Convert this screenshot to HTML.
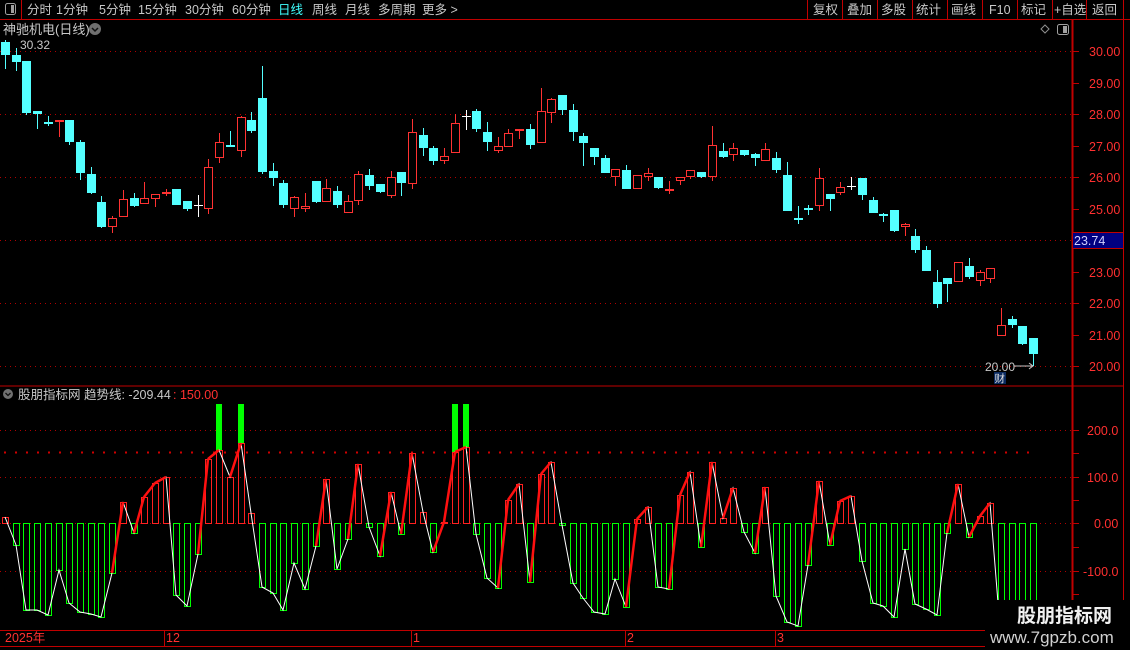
<!DOCTYPE html>
<html><head><meta charset="utf-8">
<style>
html,body{margin:0;padding:0;background:#000;width:1130px;height:650px;overflow:hidden}
svg{display:block}
text{font-family:"Liberation Sans","Noto Sans CJK SC",sans-serif}
</style></head><body>
<svg id="s" width="1130" height="650" xmlns="http://www.w3.org/2000/svg">
<rect width="1130" height="650" fill="#000"/>
<line x1="0" y1="19.5" x2="1130" y2="19.5" stroke="#c00000"/>
<line x1="21.5" y1="0" x2="21.5" y2="19" stroke="#c00000"/>
<rect x="5.5" y="3.5" width="10" height="11" rx="2" fill="none" stroke="#a0a0a0"/>
<rect x="11" y="5" width="3" height="8" fill="#a0a0a0"/>
<g font-size="12.5" fill="#c8c8c8">
<text x="27" y="14">分时</text><text x="56" y="14">1分钟</text><text x="99" y="14">5分钟</text>
<text x="138" y="14">15分钟</text><text x="185" y="14">30分钟</text><text x="232" y="14">60分钟</text>
<text x="278" y="14" fill="#40ffff">日线</text><text x="312" y="14">周线</text><text x="345" y="14">月线</text>
<text x="378" y="14">多周期</text><text x="422" y="14">更多 &gt;</text>
<text x="813" y="14">复权</text><text x="847" y="14">叠加</text><text x="881" y="14">多股</text>
<text x="916" y="14">统计</text><text x="951" y="14">画线</text><text x="989" y="14">F10</text>
<text x="1021" y="14">标记</text><text x="1054" y="14">+自选</text><text x="1092" y="14">返回</text>
</g>
<g stroke="#c00000"><line x1="807.5" y1="0" x2="807.5" y2="19"/><line x1="842.5" y1="0" x2="842.5" y2="19"/><line x1="877.5" y1="0" x2="877.5" y2="19"/><line x1="912.5" y1="0" x2="912.5" y2="19"/><line x1="947.5" y1="0" x2="947.5" y2="19"/><line x1="982.5" y1="0" x2="982.5" y2="19"/><line x1="1017.5" y1="0" x2="1017.5" y2="19"/><line x1="1052.5" y1="0" x2="1052.5" y2="19"/><line x1="1086.5" y1="0" x2="1086.5" y2="19"/><line x1="1123.5" y1="0" x2="1123.5" y2="19"/></g>
<text x="3" y="34" font-size="13" fill="#c8c8c8">神驰机电(日线)</text>
<circle cx="95" cy="29" r="6" fill="#707070"/><path d="M92 28 L95 31 L98 28" stroke="#111" stroke-width="1.5" fill="none"/>
<path d="M1045 25 L1049 29 L1045 33 L1041 29 Z" fill="none" stroke="#909090"/>
<rect x="1057.5" y="24.5" width="11" height="10" rx="2" fill="none" stroke="#a0a0a0"/><rect x="1063" y="26" width="4" height="7" fill="#a0a0a0"/>
<text x="20" y="49" font-size="12" fill="#c8c8c8">30.32</text>
<line x1="1072.5" y1="19" x2="1072.5" y2="630" stroke="#c00000" stroke-width="2"/>
<line x1="1123.5" y1="19" x2="1123.5" y2="650" stroke="#c00000"/>
<line x1="0" y1="386" x2="1123" y2="386" stroke="#c00000"/>
<line x1="0" y1="630.5" x2="1123" y2="630.5" stroke="#c00000"/>
<line x1="0" y1="646.5" x2="1130" y2="646.5" stroke="#c00000"/>
<g id="grid"></g>
<g id="ind"></g>
<g id="cand" shape-rendering="crispEdges"></g>
<g font-size="12.5" fill="#ff3030">
<text x="1089" y="56">30.00</text><text x="1089" y="88">29.00</text><text x="1089" y="119">28.00</text>
<text x="1089" y="151">27.00</text><text x="1089" y="182">26.00</text><text x="1089" y="214">25.00</text>
<text x="1089" y="277">23.00</text><text x="1089" y="308">22.00</text><text x="1089" y="340">21.00</text><text x="1089" y="371">20.00</text>
<text x="1087" y="435">200.0</text><text x="1087" y="482">100.0</text><text x="1094" y="528">0.00</text><text x="1083" y="576">-100.0</text>
</g>
<rect x="1073" y="233" width="50" height="15" fill="#000080"/>
<text x="1074" y="245" font-size="12.5" fill="#d0d0ff">23.74</text>
<line x1="1073" y1="248.5" x2="1123" y2="248.5" stroke="#c00000"/><line x1="1073" y1="232.5" x2="1123" y2="232.5" stroke="#c00000"/>
<circle cx="8" cy="394" r="5" fill="#707070"/><path d="M5.5 393 L8 395.5 L10.5 393" stroke="#111" stroke-width="1.3" fill="none"/>
<text x="18" y="399" font-size="12.5" fill="#c8c8c8">股朋指标网  趋势线: -209.44</text>
<text x="173" y="399" font-size="12.5" fill="#ff3030">: 150.00</text>
<text x="985" y="371" font-size="12" fill="#c8c8c8">20.00</text>
<path d="M1014 366 L1033 366 M1029 363 L1033 366 L1029 369" stroke="#c8c8c8" fill="none"/>
<rect x="994" y="372" width="12" height="12" fill="#0a2a60"/><text x="994.5" y="382" font-size="10.5" fill="#e0e0e0">财</text>
<g font-size="12.5" fill="#ff3030"><text x="5" y="642">2025年</text><text x="166" y="642">12</text><text x="413" y="642">1</text><text x="627" y="642">2</text><text x="777" y="642">3</text></g>
<g stroke="#c00000"><line x1="164.5" y1="630" x2="164.5" y2="646"/><line x1="411.5" y1="630" x2="411.5" y2="646"/><line x1="625.5" y1="630" x2="625.5" y2="646"/><line x1="775.5" y1="630" x2="775.5" y2="646"/></g>
<rect x="985" y="600" width="145" height="50" fill="#000"/>
<text x="1017" y="622" font-size="19" font-weight="bold" fill="#f0f0f0">股朋指标网</text>
<text x="990" y="643" font-size="17" fill="#d0d0d0">www.7gpzb.com</text>
</svg>
<script>
var NS="http://www.w3.org/2000/svg";
function el(p,t,a){var e=document.createElementNS(NS,t);for(var k in a)e.setAttribute(k,a[k]);p.appendChild(e);return e;}
var grid=document.getElementById('grid');
[51,114,177,240,303,366,430,477,523,571].forEach(function(y){el(grid,'line',{x1:0,y1:y+.5,x2:1072,y2:y+.5,stroke:'#b00000','stroke-dasharray':'1 4'});});
el(grid,'line',{x1:4,y1:452.5,x2:1036,y2:452.5,stroke:'#d00000','stroke-width':2,'stroke-dasharray':'2 9'});
[51,83,114,146,177,209,240,272,303,335,366].forEach(function(y){el(grid,'line',{x1:1073,y1:y+.5,x2:1079,y2:y+.5,stroke:'#c00000'});});
[430,453,477,500,523,547,571,594].forEach(function(y){el(grid,'line',{x1:1073,y1:y+.5,x2:1079,y2:y+.5,stroke:'#c00000'});});
var C=[
['c',42,55,40,69],['c',55,62,48,71],['c',61,113,61,115],['c',111,114,111,129],['c',122,124,116,126],['r',120,122,120,137],['c',120,142,120,145],['c',142,173,140,180],['c',174,193,167,194],['c',202,227,196,228],
['r',218,227,216,233],['r',199,217,190,217],['c',198,206,193,207],['r',198,204,182,204],['r',194,199,194,207],['r',192,194,189,196],['c',189,205,189,205],['c',201,209,201,211],['w',205,206,195,217],['r',167,209,159,214],
['r',142,158,133,163],['c',145,147,131,147],['r',117,151,116,157],['c',120,131,112,133],['c',98,172,66,174],['c',171,178,163,186],['c',183,205,180,208],['r',197,209,196,217],['r',206,209,193,212],['c',181,202,181,203],
['r',188,202,179,202],['c',191,205,186,208],['r',201,213,195,213],['r',174,201,171,205],['c',175,186,169,190],['c',184,192,184,193],['r',177,196,171,198],['c',172,183,172,196],['r',132,184,119,189],['c',135,148,128,156],
['c',148,161,146,165],['r',156,161,148,164],['r',123,153,114,153],['w',116,117,110,130],['c',111,129,109,132],['c',132,142,122,151],['r',146,151,137,153],['r',133,147,129,147],['r',129,131,129,139],['c',129,145,124,149],
['r',111,143,88,143],['r',99,113,98,123],['c',95,110,95,115],['c',110,132,104,141],['c',136,143,133,166],['c',148,157,148,165],['c',158,173,155,173],['r',169,177,169,186],['c',170,189,165,189],['r',175,189,175,189],
['r',173,177,168,181],['c',177,188,177,189],['r',189,191,181,194],['r',177,181,177,185],['r',170,177,170,179],['c',172,177,172,178],['r',145,177,126,181],['c',151,157,143,158],['r',148,155,143,161],['c',150,155,150,156],
['c',154,158,153,166],['r',149,161,143,161],['c',158,170,152,173],['c',175,211,162,211],['c',218,220,206,224],['c',208,210,205,215],['r',178,206,168,211],['c',194,199,194,211],['r',187,193,182,195],['w',186,187,177,190],
['c',178,195,178,200],['c',200,213,197,213],['c',214,216,213,222],['c',210,231,210,232],['r',224,227,223,236],['c',236,250,229,253],['c',250,271,246,271],['c',282,304,270,308],['c',278,284,278,302],['r',262,282,262,282],
['c',266,277,258,279],['r',272,281,270,286],['r',268,279,268,283],['r',325,336,308,336],['c',319,325,316,328],['c',326,344,326,345],['c',338,354,338,366]];
var V=[517,545,610,610,615,570,603,612,614,617,573,502,533,497,483,477,595,606,554,459,450,477,443,513,587,593,610,563,589,546,479,569,539,464,527,556,492,534,453,512,552,522,452,447,534,578,588,500,484,582,474,462,525,583,598,612,614,579,607,519,507,587,589,495,472,547,462,518,488,532,553,487,596,622,626,565,481,545,501,496,561,603,606,617,549,604,609,615,533,484,537,516,503,640,640,640,640];
function X(i){return Math.round(5+10.71*i);}
var cg=document.getElementById('cand');
C.forEach(function(c,i){var x=X(i),t=c[0],col=t=='c'?'#54ffff':(t=='r'?'#ff3232':'#ffffff');
 el(cg,'line',{x1:x+.5,y1:c[3],x2:x+.5,y2:c[4],stroke:col});
 var h=c[2]-c[1];
 if(t=='c'){el(cg,'rect',{x:x-4,y:c[1],width:9,height:Math.max(h,1.5),fill:col});}
 else if(t=='r'){if(h<2)el(cg,'rect',{x:x-4,y:c[1],width:9,height:2,fill:col});else el(cg,'rect',{x:x-3.5,y:c[1]+.5,width:8,height:h-1,fill:'#000',stroke:col});}
 else{el(cg,'line',{x1:x-4,y1:c[1]+.5,x2:x+5,y2:c[1]+.5,stroke:col});}
});
var ig=document.getElementById('ind');
var clip=el(ig,'clipPath',{id:'cp'});el(clip,'rect',{x:0,y:388,width:1072,height:240});
var g=el(ig,'g',{'clip-path':'url(#cp)'});
var gb=el(g,'g',{'shape-rendering':'crispEdges'});
V.forEach(function(v,i){var x=X(i);
 if(v<523){el(gb,'rect',{x:x-2.5,y:v+.5,width:6,height:523-v,fill:'none',stroke:'#ff2020'});}
 else if(v>524){el(gb,'rect',{x:x-2.5,y:523.5,width:6,height:v-523,fill:'none',stroke:'#00ff00'});}
});
[20,22,42,43].forEach(function(i){var x=X(i);el(gb,'rect',{x:x-3,y:404,width:6,height:V[i]-404,fill:'#00ff00'});});
var pts=V.map(function(v,i){return X(i)+','+v;}).join(' ');
el(g,'polyline',{points:pts,fill:'none',stroke:'#ffffff','stroke-width':1});
for(var i=0;i<V.length-1;i++){if(V[i+1]<V[i]&&V[i+1]<523){el(g,'line',{x1:X(i),y1:V[i],x2:X(i+1),y2:V[i+1],stroke:'#ff1010','stroke-width':2.5});}}
</script>
</body></html>
